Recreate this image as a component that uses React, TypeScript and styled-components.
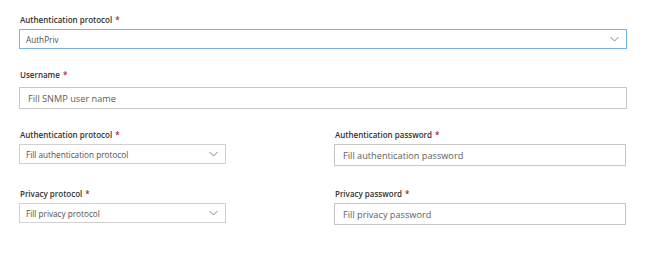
import React from "react";
import styled, { createGlobalStyle } from "styled-components";

const Global = createGlobalStyle`
  html, body { margin: 0; padding: 0; background: #ffffff; }
  body { font-family: "Open Sans", "Noto Sans", sans-serif; }
  * { box-sizing: border-box; }
`;

const Form = styled.div`
  width: 648px;
  height: 253px;
  padding: 14px 21px 0 19px;
  display: flex;
  flex-direction: column;
  gap: 20px;
  overflow: hidden;
`;

const Row = styled.div<{ $offset?: number }>`
  display: grid;
  grid-template-columns: 292px 292px;
  column-gap: 23px;
  margin-top: ${(p) => p.$offset ?? 0}px;
`;

const Field = styled.div<{ $width?: number }>`
  display: flex;
  flex-direction: column;
  width: ${(p) => (p.$width ? `${p.$width}px` : "100%")};
`;

const Label = styled.div<{ $gap?: number }>`
  font-size: 8px;
  line-height: 12px;
  font-weight: 600;
  color: #323130;
  margin-bottom: ${(p) => p.$gap ?? 3}px;
  padding-left: 1px;
  white-space: nowrap;
`;

const Star = styled.span`
  color: #a4262c;
  margin-left: 3px;
`;

const SelectBox = styled.div<{ $focused?: boolean }>`
  height: 20px;
  border: 1px solid ${(p) => (p.$focused ? "#71b3ea" : "#d2d0ce")};
  background: #fff;
  display: flex;
  align-items: center;
  justify-content: space-between;
  padding: 0 7px 0 6px;
  font-size: 8.2px;
  color: #504e4c;
  white-space: nowrap;
`;

const Chevron = styled.svg`
  width: 9px;
  height: 6px;
  flex: none;
`;

const InputBox = styled.div`
  height: 22px;
  border: 1px solid #c8c6c4;
  background: #fff;
  display: flex;
  align-items: center;
  padding: 0 8px;
  font-size: 9.2px;
  color: #605e5c;
  white-space: nowrap;
`;

const ChevronIcon = () => (
  <Chevron viewBox="0 0 9 6">
    <path d="M0.5 1 L4.5 5 L8.5 1" fill="none" stroke="#7a7876" strokeWidth="0.9" />
  </Chevron>
);

const Select = ({ value, focused }: { value: string; focused?: boolean }) => (
  <SelectBox $focused={focused}>
    <span>{value}</span>
    <ChevronIcon />
  </SelectBox>
);

export default function App() {
  return (
    <>
      <Global />
      <Form>
        <Field>
          <Label>
            Authentication protocol<Star>*</Star>
          </Label>
          <Select value="AuthPriv" focused />
        </Field>

        <Field>
          <Label $gap={6}>
            Username<Star>*</Star>
          </Label>
          <InputBox>Fill SNMP user name</InputBox>
        </Field>

        <Row>
          <Field $width={207}>
            <Label>
              Authentication protocol<Star>*</Star>
            </Label>
            <Select value="Fill authentication protocol" />
          </Field>
          <Field>
            <Label>
              Authentication password<Star>*</Star>
            </Label>
            <InputBox>Fill authentication password</InputBox>
          </Field>
        </Row>

        <Row $offset={2}>
          <Field $width={207}>
            <Label>
              Privacy protocol<Star>*</Star>
            </Label>
            <Select value="Fill privacy protocol" />
          </Field>
          <Field>
            <Label>
              Privacy password<Star>*</Star>
            </Label>
            <InputBox>Fill privacy password</InputBox>
          </Field>
        </Row>
      </Form>
    </>
  );
}
